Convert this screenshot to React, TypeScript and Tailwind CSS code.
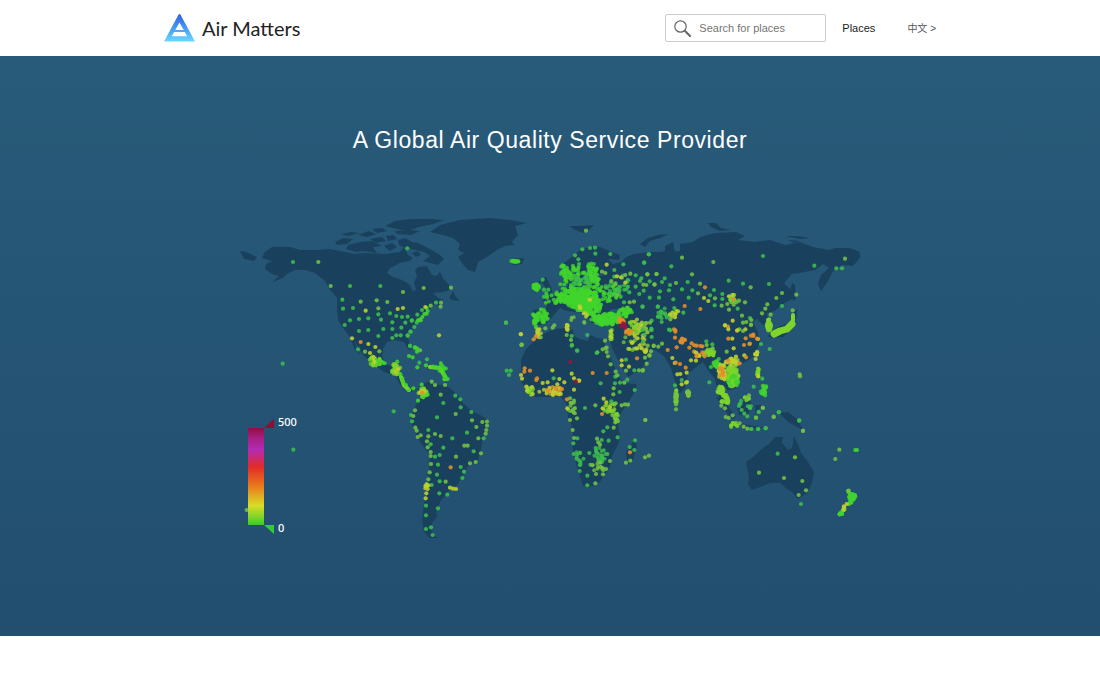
type Tone = 'green' | 'lime' | 'bright' | 'vivid' | 'yellow' | 'orange' | 'red';

type Region = {
  name: string;
  origin: [number, number];
  dots: Partial<Record<Tone, string>>;
};

// cx, cy, rx, ry, number of stations, tone
type Cluster = [number, number, number, number, number, Tone];

const tones: Record<Tone, string> = {
  green: '#3dbb4c',
  lime: '#72c044',
  bright: '#41d42d',
  vivid: '#7ed42b',
  yellow: '#bdd02f',
  orange: '#e38d2b',
  red: '#a0123c',
};

const land = [
  // North America
  'M265 252L272 247L290 247L300 250L316 250L330 249L345 252L355 254L365 253L385 254L400 252L404 247L408 255L413 258L410 261L400 263L390 268L387 273L393 277L402 280L409 284L413 291L416 290L414 282L417 276L415 270L418 267L427 266L432 275L436 276L440 272L443 278L449 285L450 290L443 292L433 293L437 297L443 300L440 306L433 305L427 313L420 320L413 328L408 337L411 350L408 349L404 342L395 340L387 342L383 349L382 356L385 364L390 366L394 361L400 360L396 370L401 374L402 382L408 387L418 389L410 392L400 384L394 375L384 372L372 363L363 355L359 348L354 340L357 348L360 355L355 350L349 336L343 328L338 320L337 310L337 298L330 290L325 281L315 273L305 270L295 270L287 274L283 278L272 282L279 276L272 274L265 269L266 264L272 261L262 258Z',
  'M240 251L246 252L257 257L254 261L244 259Z',
  'M449 298L453 291L455 296L460 301L452 300Z',
  'M335 242L343 238L353 239L347 244L337 245Z',
  'M348 245L360 242L372 241L382 246L373 247L377 253L364 251L356 252L346 249Z',
  'M341 234L351 232L359 233L348 236ZM358 235L369 231L376 234L367 237ZM370 239L382 237L386 241L376 243ZM372 229L382 228L387 231L377 233ZM385 226L395 221L410 219L430 219L444 220L433 224L419 227L407 231L397 229Z',
  'M395 231L410 230L420 231L411 235L397 234ZM384 246L392 243L397 247L390 251ZM386 236L394 235L397 239L388 241ZM391 254L401 253L404 259L396 262Z',
  'M398 240L405 238L412 242L418 243L428 248L440 255L444 259L438 265L430 263L423 261L430 256L424 252L416 250L406 248L399 245ZM412 253L418 251L421 255L416 257Z',
  // Greenland
  'M430 232L440 225L460 220L490 218L510 220L527 223L515 226L518 235L512 242L515 245L505 246L497 250L487 257L478 262L475 272L468 270L462 263L458 257L464 253L458 250L460 244L453 238L443 235Z',
  // South America
  'M418 388L422 384L430 381L432 384L443 385L450 388L458 395L463 403L472 411L482 416L489 421L488 430L483 438L481 450L478 460L468 466L463 475L458 484L450 490L444 497L440 502L436 512L437 517L432 523L431 530L437 538L430 538L424 532L422 520L424 505L426 490L429 470L430 455L422 445L415 433L411 422L412 414L416 405L420 398Z',
  // Africa
  'M537 338L543 334L555 329L567 328L573 330L574 336L580 339L588 341L590 335L597 338L604 339L605 347L611 358L617 373L623 383L637 384L633 395L623 410L617 420L620 437L618 445L612 456L610 467L600 482L588 488L583 486L578 470L574 457L572 443L573 430L568 417L567 405L561 397L550 397L535 397L527 390L520 380L521 370L521 360L526 349Z',
  'M635 439L637 446L632 463L627 464L626 452Z',
  // Europe and Asia
  'M533 310L547 308L546 303L542 300L555 296L560 290L568 286L568 280L574 285L590 284L597 277L604 275L594 273L592 266L588 266L584 274L580 281L573 275L563 276L559 270L563 264L572 257L580 250L590 247L600 247L609 251L620 255L619 260L608 259L613 264L621 262L626 257L634 254L649 252L660 252L665 251L665 246L673 242L675 252L680 251L680 244L693 242L700 237L715 233L736 232L745 236L738 240L755 242L770 240L785 245L800 242L813 247L829 250L835 248L850 248L860 252L860 258L853 266L842 265L833 271L828 281L821 291L818 284L821 275L829 268L823 264L815 270L800 273L792 274L784 283L793 292L792 299L781 305L775 311L767 313L769 324L763 325L757 319L753 322L758 332L760 342L754 356L744 363L734 365L732 371L738 379L736 388L728 391L723 384L720 388L725 400L730 411L722 405L718 394L715 379L708 370L703 362L696 367L688 374L685 388L680 393L676 385L671 368L664 356L655 350L649 350L652 356L640 370L628 377L622 368L612 348L609 336L613 326L602 324L600 316L607 314L618 315L628 315L623 309L612 309L605 314L600 323L591 323L584 313L576 312L567 311L560 308L554 315L546 324L540 325L533 322Z',
  'M540 279L546 277L551 287L553 296L544 298L548 292ZM532 283L540 281L541 289L534 291Z',
  'M510 259L524 258L522 264L513 265Z',
  'M569 226L580 226L594 225L589 230L583 233L575 230Z',
  'M640 244L648 238L658 235L669 234L660 238L650 241L645 247Z',
  'M708 223L716 223L721 228L731 230L720 231L711 227ZM785 236L798 236L810 238L800 239ZM788 240L800 241L794 243Z',
  'M792 283L795 285L796 299L793 301L790 291Z',
  'M768 336L776 328L790 322L793 313L798 309L794 327L783 337L771 338Z',
  // South East Asia and Oceania
  'M716 397L722 398L736 417L732 419L724 409ZM737 407L748 399L753 405L747 416L739 415ZM731 420L748 425L765 428L748 429ZM755 405L762 405L757 412L756 417Z',
  'M779 413L788 412L797 419L804 431L797 427L787 421Z',
  'M746 462L753 457L763 448L770 443L775 437L783 437L782 443L788 450L792 448L794 436L798 444L801 453L808 462L814 472L812 483L807 493L798 499L792 492L787 489L780 483L770 483L760 487L752 490L748 485L749 477Z',
];

// Stations sit on a grid of thirds, counted from each region's own corner.
const regions: Region[] = [
  {
    name: 'north-america-west',
    origin: [235, 210],
    dots: {
      green: '174,156 345,228 436,228 322,269 324,296 354,294 372,327 400,325 345,331 329,345 372,363 400,360 430,313 438,329 445,357 430,378 465,310 472,337 472,357 472,384 484,318 501,321 518,320 511,338 499,353 484,376 497,376 518,377 530,332 527,365 369,418 517,115 143,461',
      lime: '250,156 287,228 377,275 425,271 457,276 430,295 504,246 390,425 433,424',
      yellow: '392,302 488,297 504,294 351,385 400,402 421,411 405,429',
      orange: '377,396',
    },
  },
  {
    name: 'north-america-east',
    origin: [390, 210],
    dots: {
      green: '82,314 66,331 73,351 61,365 53,376 96,300 60,407 80,338 138,278',
      lime: '101,234 183,233 153,278 152,290 122,287 348,338 395,404',
      bright: '110,294 113,303 110,311 103,312 84,331 90,328 97,321 92,331 75,412 82,416',
      yellow: '147,376 393,373 106,291',
    },
  },
  {
    name: 'latin-america',
    origin: [360, 340],
    dots: {
      green: '150,18 201,58 101,214 250,189 286,167 301,178 302,202 334,216 231,232 205,270 277,295 321,278 250,323 234,374 231,404 307,414 312,395 302,381 239,424 238,460 262,464 234,505 198,526 198,567 213,562 218,585 225,350 239,345 198,497 156,244 153,225 212,313 341,334 371,295 178,68 215,435',
      lime: '215,125 225,135 242,164 287,222 336,241 349,261 225,282 205,289 242,288 363,340 330,370 347,366 288,350 213,372 209,397 205,418 257,425 201,304 203,322 212,336 212,348 166,263 170,272 173,291 182,286 165,211 160,228 367,246 381,245 381,257 379,270 377,281 355,295 313,317 323,317 255,135 180,31',
      bright: '147,48 158,52 165,23 171,35 198,76 172,82 218,80 228,82 238,83 250,90 252,102 255,112 263,117 253,118 112,65 121,103 127,116 130,126 138,135 146,150 160,145 185,134 174,182 190,172 203,164',
      yellow: '270,443 279,446 288,447 205,436 203,447 199,460 197,475 108,95 115,88',
      orange: '272,382 186,158',
    },
  },
  {
    name: 'europe',
    origin: [500, 215],
    dots: {
      green: '247,103 270,99 285,98 286,116 225,121 235,133 237,147 331,117 447,118 433,143 370,148 128,194 132,224 145,224 343,165 343,185 407,181 420,198 449,199 407,215 388,232 418,237 372,262 362,245 428,275 474,275 477,248 474,305 262,360 215,363 232,407 455,317 453,345 455,366 428,345 18,323',
      lime: '258,47 306,170 316,174 334,198 346,208 376,180 391,176 442,178 470,177 464,209 430,209 402,260 389,262 352,240 163,331 158,338 136,340 122,367 200,360 213,375 216,390 64,390 308,403 292,412 320,398 443,392 461,392 475,395',
      yellow: '320,149 351,184 363,187 376,203 62,357 202,330 202,342 114,352 118,343 333,350 333,366 398,382 412,400 437,408 423,330',
      orange: '101,373 108,364 388,352 379,349',
    },
  },
  {
    name: 'africa',
    origin: [500, 320],
    dots: {
      green: '161,175 290,99 215,77 231,92 302,190 20,152 32,152 27,165 346,170 345,190 404,210 310,334 322,322 353,352 326,362 305,360 268,399 221,402 232,355 220,370 262,467 262,496 239,453 287,384 322,402 255,264 405,361 403,390 389,381 359,216 334,244 378,119 403,151 360,188 382,179',
      lime: '65,74 315,62 317,84 320,96 324,109 332,133 347,155 352,166 373,188 341,205 340,223 347,250 365,256 375,253 384,254 286,256 210,300 231,295 218,330 222,354 291,356 295,367 300,374 341,323 286,490 288,462 309,463 318,447 330,423 301,428 436,300 378,428 391,422 210,235 222,242 345,292 353,303 337,285 378,152 417,151 429,150 440,131 435,412 447,407',
      yellow: '157,151 178,177 215,161 235,182 238,182 222,175 222,209 193,187 172,193 143,187 128,189 96,201 79,200 81,212 63,165 66,176 311,236 319,247 308,265 330,262 202,265 365,121 388,87 396,69 387,140 365,136 437,94 448,106 98,222',
      orange: '74,145 90,152 111,175 109,180 278,159 320,159 306,282 390,397 201,238 144,213 167,206 186,207 411,115 73,155',
      red: '211,126 228,185',
    },
  },
  {
    name: 'asia-north',
    origin: [640, 215],
    dots: {
      green: '26,118 12,143 94,154 369,123 523,152 589,160 606,160 266,197 309,206 387,207 74,190 66,201 143,201 90,210 60,229 11,227 29,248 87,226 126,223 100,253 157,226 146,248 103,279 53,275 7,275 130,293 210,241 222,225 224,271 247,237 247,252 290,262 293,281 426,273 63,289 75,295 55,305 65,321 85,303 34,341 91,346 330,309 4,190',
      lime: '126,128 220,141 615,131 156,178 22,178 49,177 19,210 43,208 108,204 180,206 174,235 225,250 245,272 262,267 281,269 285,260 297,257 315,262 267,284 332,217 409,249 426,234 469,239 382,268 376,281 366,295 392,299 458,286 306,302 334,315 319,321 309,323 333,330 15,325 30,323 91,313',
      yellow: '192,249 267,244 277,240 278,317 106,297 105,307 114,289 90,298 316,343 255,331 205,258',
      orange: '195,217 134,273 181,282 264,335 291,347 102,343 106,350 281,252 340,359',
    },
  },
  {
    name: 'asia-south',
    origin: [640, 320],
    dots: {
      green: '14,44 9,65 35,30 199,64 217,73 208,187 297,258 305,270 313,281 322,289 330,264 356,276 417,276 348,293 354,327 363,72 389,87 334,327 341,200 236,117 125,180 105,196 87,29 367,176 478,301',
      lime: '41,78 66,71 29,107 15,113 8,152 33,94 200,75 218,85 260,95 309,33 298,28 333,14 401,291 368,263 377,324 489,332 479,163 480,169 321,233 327,226 257,291 266,294 278,286 322,326 311,320 16,300 108,253 108,268 107,219 107,230 107,240 244,257 255,265 144,213 144,224 328,72',
      yellow: '17,94 97,114 104,129 112,163 121,162 140,158 138,188 125,193 141,186 153,121 168,122 274,116 288,110 313,106 265,28 255,16 277,56 292,31 281,85 354,57 349,103 352,97 355,169 168,98 178,108 347,117',
      orange: '106,31 105,53 126,56 127,68 135,60 155,70 163,76 181,78 187,79 148,83 110,82 83,90 120,132 107,128 137,143 170,77 194,109 169,108 265,56 330,71 312,75 340,48 333,47 351,56 299,130 318,112 317,55 265,122 125,65',
    },
  },
  {
    name: 'oceania',
    origin: [720, 400],
    dots: {
      green: '173,161 237,62 243,312 176,37 116,36 94,87 115,87 137,85 90,24 359,343',
      bright: '406,150 411,150 359,343 366,341 394,308',
      lime: '225,172 117,218 192,234 247,243 258,271 236,285 249,93 358,149 346,177 129,24 161,50 108,53 386,272',
      yellow: '372,319 371,329 380,312',
    },
  },
  {
    name: 'pacific',
    origin: [230, 405],
    dots: { green: '190,134', lime: '50,315' },
  },
];

const clusters: Cluster[] = [
  // Europe
  [582, 299, 14, 10, 260, 'bright'],
  [566, 297, 10, 6, 50, 'bright'],
  [590, 306, 10, 8, 100, 'bright'],
  [593, 278, 6, 8, 42, 'bright'],
  [592, 268, 5, 4, 16, 'bright'],
  [564, 271, 5, 5, 20, 'bright'],
  [577, 272, 7, 6, 20, 'bright'],
  [570, 283, 9, 7, 26, 'bright'],
  [583, 282, 8, 5, 18, 'green'],
  [536, 287, 3, 3, 26, 'bright'],
  [553, 298, 9, 6, 20, 'bright'],
  [541, 316, 7, 7, 34, 'bright'],
  [536, 320, 2, 6, 14, 'bright'],
  [606, 319, 13, 5, 120, 'bright'],
  [625, 312, 6, 4, 34, 'bright'],
  [607, 293, 11, 7, 34, 'bright'],
  [617, 285, 11, 9, 26, 'green'],
  [575, 322, 11, 4, 6, 'lime'],
  [634, 328, 6, 6, 30, 'vivid'],
  [640, 327, 8, 7, 12, 'yellow'],
  [632, 340, 12, 9, 12, 'lime'],
  [641, 342, 8, 7, 8, 'yellow'],
  [611, 334, 1, 5, 10, 'vivid'],
  [580, 307, 1, 1, 5, 'yellow'],
  [590, 300, 1, 1, 2, 'yellow'],
  [585, 315, 2, 2, 4, 'yellow'],
  [567, 327, 1, 3, 7, 'yellow'],
  [539, 333, 2, 4, 7, 'yellow'],
  [621, 321, 3, 3, 14, 'orange'],
  [622, 325, 2, 2, 4, 'red'],
  [626, 328, 1, 1, 3, 'red'],
  [629, 332, 3, 2, 8, 'orange'],
  [516, 261, 4, 1, 12, 'bright'],
  // The Americas
  [375, 361, 5, 5, 24, 'vivid'],
  [378, 363, 6, 4, 10, 'bright'],
  [396, 369, 4, 5, 22, 'vivid'],
  [374, 359, 3, 3, 4, 'yellow'],
  [423, 393, 4, 4, 20, 'vivid'],
  [422, 392, 3, 2, 6, 'yellow'],
  [426, 486, 1, 6, 8, 'yellow'],
  [443, 370, 4, 7, 8, 'bright'],
  // Africa
  [555, 391, 7, 4, 20, 'orange'],
  [550, 392, 12, 4, 20, 'yellow'],
  [531, 390, 4, 4, 10, 'vivid'],
  [572, 408, 5, 5, 14, 'lime'],
  [579, 458, 4, 6, 12, 'green'],
  [600, 455, 5, 7, 22, 'green'],
  [598, 467, 8, 5, 12, 'lime'],
  [609, 408, 5, 6, 16, 'vivid'],
  [616, 418, 2, 5, 12, 'vivid'],
  // Asia
  [733, 299, 3, 4, 10, 'vivid'],
  [665, 314, 7, 5, 10, 'green'],
  [674, 314, 3, 5, 5, 'yellow'],
  [643, 328, 5, 4, 8, 'lime'],
  [644, 351, 4, 4, 6, 'yellow'],
  [709, 353, 5, 4, 24, 'vivid'],
  [715, 365, 4, 4, 16, 'bright'],
  [732, 376, 6, 9, 90, 'vivid'],
  [733, 380, 5, 6, 16, 'bright'],
  [722, 373, 3, 8, 40, 'yellow'],
  [732, 362, 6, 3, 24, 'yellow'],
  [722, 372, 2, 7, 8, 'orange'],
  [720, 391, 3, 4, 24, 'vivid'],
  [725, 400, 3, 5, 24, 'vivid'],
  [764, 390, 3, 5, 18, 'bright'],
  [758, 372, 1, 4, 12, 'vivid'],
  [757, 354, 2, 2, 6, 'yellow'],
  [698, 353, 5, 4, 8, 'orange'],
  [676, 397, 1, 6, 20, 'vivid'],
  [688, 393, 1, 3, 14, 'vivid'],
  [735, 425, 6, 2, 10, 'vivid'],
  [747, 398, 2, 2, 6, 'vivid'],
  [745, 405, 7, 6, 6, 'green'],
  [769, 325, 2, 5, 34, 'vivid'],
  [682, 341, 3, 2, 8, 'orange'],
  // New Zealand
  [852, 497, 3, 3, 24, 'bright'],
  [844, 508, 1, 2, 8, 'vivid'],
  [841, 513, 2, 1, 6, 'bright'],
];

// Chains of stations that run along a coast.
const coasts: [string, number, Tone][] = [
  ['M774 334L780 331L787 329L792 324', 7, 'vivid'],
  ['M791 326L793 320V315', 4, 'vivid'],
  ['M401 377L404 385L409 390', 4, 'vivid'],
  ['M430 367L440 368L444 375L446 379', 4, 'vivid'],
  ['M848 491L853 498L849 504', 4, 'bright'],
];

const legendStops = [
  ['0%', '#8e1040'],
  ['10%', '#a81d80'],
  ['22%', '#b22bb4'],
  ['40%', '#e32a2a'],
  ['60%', '#ea7a1c'],
  ['80%', '#d8dc28'],
  ['90%', '#8fd629'],
  ['100%', '#35cc30'],
];

// Small repeatable noise, so that the stations stay put between renders.
function noise(seed: number) {
  const n = Math.sin(seed * 127.1) * 43758.5453;
  return n - Math.floor(n);
}

function scatter([cx, cy, rx, ry, count]: Cluster) {
  return Array.from({ length: count }, (_, i) => {
    const angle = noise(i + cx) * Math.PI * 2;
    const r = Math.pow(noise(i * 1.7 + cy), 0.6) * 1.2;
    return [cx + Math.cos(angle) * rx * r, cy + Math.sin(angle) * ry * r];
  });
}

function parse(dots: string) {
  return dots.split(' ').map((pair) => pair.split(',').map(Number));
}

function Logo() {
  return (
    <svg viewBox="0 0 32 28" className="w-8 h-7" aria-hidden="true">
      <defs>
        <linearGradient id="logo" x1="0" y1="0" x2="0" y2="1">
          <stop offset="0" stopColor="#2f62dc" />
          <stop offset="0.5" stopColor="#4399f2" />
          <stop offset="1" stopColor="#6cd8ff" />
        </linearGradient>
      </defs>
      <path
        fill="url(#logo)"
        fillRule="evenodd"
        d="M14.600.5Q15.500-.3 16.400.5L31 27.500H0ZM15.500 8.500L11.300 16H19.700ZM10.200 18L7.800 22.300H23.200L20.800 18Z"
      />
    </svg>
  );
}

function WorldMap() {
  return (
    <svg
      viewBox="230 200 640 350"
      className="w-full max-w-[640px] h-auto"
      role="img"
      aria-label="Air quality stations around the world"
    >
      <defs>
        <linearGradient id="scale" x1="0" y1="0" x2="0" y2="1">
          {legendStops.map(([offset, color]) => (
            <stop key={offset} offset={offset} stopColor={color} />
          ))}
        </linearGradient>
      </defs>
      <g fill="#183f5b" fillOpacity="0.9">
        {land.map((d) => (
          <path key={d} d={d} />
        ))}
      </g>
      <g fill="none" strokeLinecap="round" strokeLinejoin="round">
        {coasts.map(([d, width, tone]) => (
          <path key={d} d={d} stroke={tones[tone]} strokeWidth={width} />
        ))}
      </g>
      {clusters.map((cluster, i) => (
        <g key={i} fill={tones[cluster[5]]} fillOpacity="0.8">
          {scatter(cluster).map(([x, y], j) => (
            <circle key={j} cx={x} cy={y} r="2" />
          ))}
        </g>
      ))}
      {regions.map(({ name, origin: [ox, oy], dots }) => (
        <g key={name}>
          {Object.entries(dots).map(([tone, list]) => (
            <g key={tone} fill={tones[tone as Tone]} fillOpacity="0.9">
              {parse(list).map(([x, y], i) => (
                <circle key={i} cx={ox + x / 3} cy={oy + y / 3} r="2.1" />
              ))}
            </g>
          ))}
        </g>
      ))}
      <rect x="248" y="428" width="16" height="97" fill="url(#scale)" />
      <path d="M264 428L274 419V428Z" fill="#8e1030" />
      <path d="M264 525H274V534Z" fill="#35cc30" />
      <g fill="#fff" fontSize="11" fontWeight="500" fontFamily='"Noto Sans", sans-serif'>
        <text x="278" y="426">500</text>
        <text x="278" y="532">0</text>
      </g>
    </svg>
  );
}

export default function App() {
  return (
    <div className="bg-white font-['Liberation_Sans',Arial,sans-serif]">
      <header className="h-14 px-4">
        <div className="max-w-[772px] h-full mx-auto flex items-center justify-between">
          <a href="#" className="flex items-center gap-1.5">
            <Logo />
            <span className="text-xl text-[#222] font-['Lato',sans-serif]">Air Matters</span>
          </a>
          <nav className="flex items-center text-[11px] text-[#222]">
            <label className="w-[161px] h-7 px-2 flex items-center gap-2 border border-[#ccc] rounded-xs">
              <svg viewBox="0 0 17 17" className="w-[17px] h-[17px] shrink-0" fill="none" stroke="#666" aria-hidden="true">
                <circle cx="6.500" cy="6.500" r="5.700" strokeWidth="1.200" />
                <path d="M10.800 10.800L16 16" strokeWidth="2" strokeLinecap="round" />
              </svg>
              <input
                type="search"
                aria-label="Search for places"
                placeholder="Search for places"
                className="w-full min-w-0 outline-none placeholder:text-[#757575]"
              />
            </label>
            <a href="#" className="ml-4">Places</a>
            <a href="#" className="ml-8 text-[10px] text-[#555] font-['Liberation_Sans','Noto_Sans_CJK_SC',sans-serif]">
              中文 &gt;
            </a>
          </nav>
        </div>
      </header>
      <main className="px-4 pt-[68px] pb-[86px] flex flex-col items-center gap-11 bg-linear-to-b from-[#285b79] to-[#224e6f]">
        <h1 className="text-[23px] leading-8 text-white text-center tracking-wide">A Global Air Quality Service Provider</h1>
        <WorldMap />
      </main>
      <footer className="h-[52px]" />
    </div>
  );
}
